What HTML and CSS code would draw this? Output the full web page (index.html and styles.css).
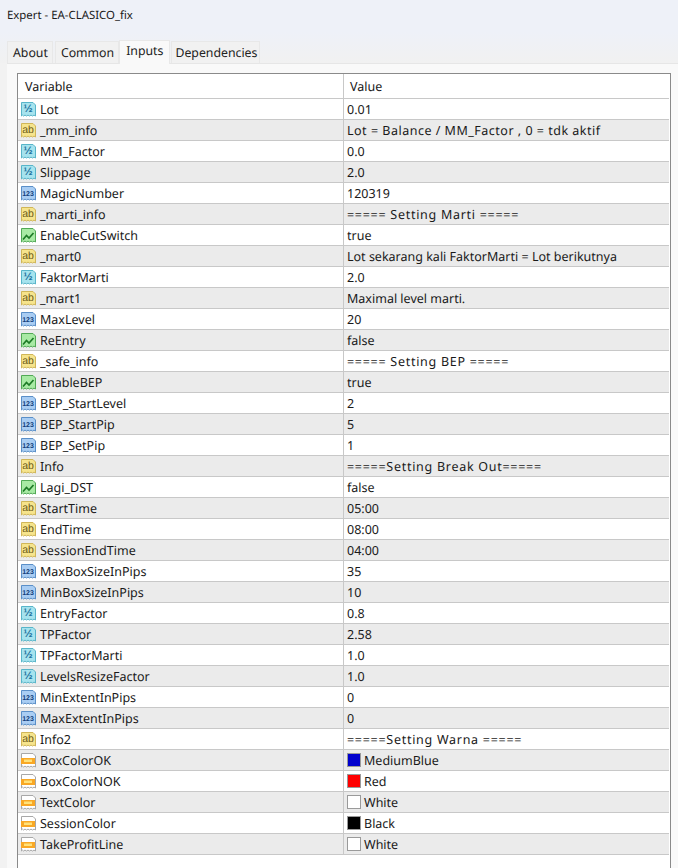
FILE: index.html
```html
<!DOCTYPE html>
<html lang="en">
<head>
<meta charset="utf-8">
<title>Expert - EA-CLASICO_fix</title>
<link rel="stylesheet" href="styles.css">
</head>
<body>
<svg class="defs" width="0" height="0" aria-hidden="true">
  <symbol id="page" viewBox="0 0 17 17"><path d="M1.5 1.5h11.5l2.5 2.5v11l-1.5-.9-1.5.9-1.5-.9-1.5.9-1.5-.9-1.5.9-1.5-.9-1.5.9-1 -.9-1 .9z" stroke-linejoin="round"/></symbol>
  <symbol id="wave" viewBox="0 0 17 17"><path d="M3 12.5l3.5-4 2.5 2.5 4.5-5" fill="none" stroke="#1d7a26" stroke-width="1.7"/></symbol>
  <symbol id="band" viewBox="0 0 17 17"><rect x="1" y="6" width="14" height="6" fill="#f9a825" stroke="none"/><rect x="4" y="7.5" width="8" height="2.5" fill="#ffe27a" stroke="none"/></symbol>
</svg>
<header class="titlebar">Expert - EA-CLASICO_fix</header>
<nav class="tabs">
  <span class="tab">About</span>
  <span class="tab">Common</span>
  <span class="tab active">Inputs</span>
  <span class="tab">Dependencies</span>
</nav>
<main class="panel">
  <div class="table">
    <div class="row head"><div class="var">Variable</div><div class="val">Value</div></div>
    <div class="row"><div class="var"><span class="ic dbl"><svg><use href="#page"/></svg></span>Lot</div><div class="val">0.01</div></div>
    <div class="row"><div class="var"><span class="ic str"><svg><use href="#page"/></svg></span>_mm_info</div><div class="val wide">Lot = Balance / MM_Factor , 0 = tdk aktif</div></div>
    <div class="row"><div class="var"><span class="ic dbl"><svg><use href="#page"/></svg></span>MM_Factor</div><div class="val">0.0</div></div>
    <div class="row"><div class="var"><span class="ic dbl"><svg><use href="#page"/></svg></span>Slippage</div><div class="val">2.0</div></div>
    <div class="row"><div class="var"><span class="ic int"><svg><use href="#page"/></svg></span>MagicNumber</div><div class="val">120319</div></div>
    <div class="row"><div class="var"><span class="ic str"><svg><use href="#page"/></svg></span>_marti_info</div><div class="val banner">===== Setting Marti =====</div></div>
    <div class="row"><div class="var"><span class="ic bool"><svg><use href="#page"/><use href="#wave"/></svg></span>EnableCutSwitch</div><div class="val">true</div></div>
    <div class="row"><div class="var"><span class="ic str"><svg><use href="#page"/></svg></span>_mart0</div><div class="val">Lot sekarang kali FaktorMarti = Lot berikutnya</div></div>
    <div class="row"><div class="var"><span class="ic dbl"><svg><use href="#page"/></svg></span>FaktorMarti</div><div class="val">2.0</div></div>
    <div class="row"><div class="var"><span class="ic str"><svg><use href="#page"/></svg></span>_mart1</div><div class="val">Maximal level marti.</div></div>
    <div class="row"><div class="var"><span class="ic int"><svg><use href="#page"/></svg></span>MaxLevel</div><div class="val">20</div></div>
    <div class="row"><div class="var"><span class="ic bool"><svg><use href="#page"/><use href="#wave"/></svg></span>ReEntry</div><div class="val">false</div></div>
    <div class="row"><div class="var"><span class="ic str"><svg><use href="#page"/></svg></span>_safe_info</div><div class="val banner">===== Setting BEP =====</div></div>
    <div class="row"><div class="var"><span class="ic bool"><svg><use href="#page"/><use href="#wave"/></svg></span>EnableBEP</div><div class="val">true</div></div>
    <div class="row"><div class="var"><span class="ic int"><svg><use href="#page"/></svg></span>BEP_StartLevel</div><div class="val">2</div></div>
    <div class="row"><div class="var"><span class="ic int"><svg><use href="#page"/></svg></span>BEP_StartPip</div><div class="val">5</div></div>
    <div class="row"><div class="var"><span class="ic int"><svg><use href="#page"/></svg></span>BEP_SetPip</div><div class="val">1</div></div>
    <div class="row"><div class="var"><span class="ic str"><svg><use href="#page"/></svg></span>Info</div><div class="val banner">=====Setting Break Out=====</div></div>
    <div class="row"><div class="var"><span class="ic bool"><svg><use href="#page"/><use href="#wave"/></svg></span>Lagi_DST</div><div class="val">false</div></div>
    <div class="row"><div class="var"><span class="ic str"><svg><use href="#page"/></svg></span>StartTime</div><div class="val">05:00</div></div>
    <div class="row"><div class="var"><span class="ic str"><svg><use href="#page"/></svg></span>EndTime</div><div class="val">08:00</div></div>
    <div class="row"><div class="var"><span class="ic str"><svg><use href="#page"/></svg></span>SessionEndTime</div><div class="val">04:00</div></div>
    <div class="row"><div class="var"><span class="ic int"><svg><use href="#page"/></svg></span>MaxBoxSizeInPips</div><div class="val">35</div></div>
    <div class="row"><div class="var"><span class="ic int"><svg><use href="#page"/></svg></span>MinBoxSizeInPips</div><div class="val">10</div></div>
    <div class="row"><div class="var"><span class="ic dbl"><svg><use href="#page"/></svg></span>EntryFactor</div><div class="val">0.8</div></div>
    <div class="row"><div class="var"><span class="ic dbl"><svg><use href="#page"/></svg></span>TPFactor</div><div class="val">2.58</div></div>
    <div class="row"><div class="var"><span class="ic dbl"><svg><use href="#page"/></svg></span>TPFactorMarti</div><div class="val">1.0</div></div>
    <div class="row"><div class="var"><span class="ic dbl"><svg><use href="#page"/></svg></span>LevelsResizeFactor</div><div class="val">1.0</div></div>
    <div class="row"><div class="var"><span class="ic int"><svg><use href="#page"/></svg></span>MinExtentInPips</div><div class="val">0</div></div>
    <div class="row"><div class="var"><span class="ic int"><svg><use href="#page"/></svg></span>MaxExtentInPips</div><div class="val">0</div></div>
    <div class="row"><div class="var"><span class="ic str"><svg><use href="#page"/></svg></span>Info2</div><div class="val banner">=====Setting Warna =====</div></div>
    <div class="row"><div class="var"><span class="ic col"><svg><use href="#page"/><use href="#band"/></svg></span>BoxColorOK</div><div class="val"><span class="sw blue"></span>MediumBlue</div></div>
    <div class="row"><div class="var"><span class="ic col"><svg><use href="#page"/><use href="#band"/></svg></span>BoxColorNOK</div><div class="val"><span class="sw red"></span>Red</div></div>
    <div class="row"><div class="var"><span class="ic col"><svg><use href="#page"/><use href="#band"/></svg></span>TextColor</div><div class="val"><span class="sw white"></span>White</div></div>
    <div class="row"><div class="var"><span class="ic col"><svg><use href="#page"/><use href="#band"/></svg></span>SessionColor</div><div class="val"><span class="sw black"></span>Black</div></div>
    <div class="row"><div class="var"><span class="ic col"><svg><use href="#page"/><use href="#band"/></svg></span>TakeProfitLine</div><div class="val"><span class="sw white"></span>White</div></div>
  </div>
</main>
</body>
</html>
```
FILE: styles.css
```css
* { box-sizing: border-box; }
html, body { margin: 0; height: 100%; overflow: hidden; }
body {
  width: 678px;
  height: 868px;
  background: #f2f2f2;
  font-family: "Noto Sans", "Open Sans", sans-serif;
  font-size: 12px;
  color: #1a1a1a;
  display: flex;
  flex-direction: column;
  text-rendering: geometricPrecision;
}
.defs { position: absolute; }
.titlebar {
  height: 32px;
  flex: none;
  padding: 5px 0 0 7px;
  background: #eef1f8;
  font-size: 11.4px;
  line-height: 21px;
}
.tabs {
  flex: none;
  height: 31px;
  padding: 9px 0 0 7px;
  display: flex;
  align-items: flex-end;
  gap: 2px;
  font-size: 12.3px;
  background: linear-gradient(#eef1f8, #f1f1f1);
}
.tab {
  height: 22px;
  padding: 0 4px 0 5px;
  line-height: 22px;
  background: #f1f1f1;
  border: 1px solid #e8e8e8;
  border-bottom: 0;
  color: #222;
}
.tab:last-child { padding: 0 2px 0 3px; }
.tab.active {
  height: 24px;
  line-height: 20px;
  background: #f9f9f9;
  padding: 0 6px 3px;
  position: relative;
  z-index: 1;
  margin: 0 -1px -1px -2px;
}
.panel {
  flex: 1;
  min-height: 0;
  background: #f9f9f9;
  margin-left: 7px;
  padding: 9px 7px 0 10px;
  border-top: 1px solid #e6e6e6;
}
.table {
  height: 100%;
  background: #fff;
  border: 1px solid #8a8a8a;
  border-bottom: 0;
  padding-right: 1px;
  font-size: 12.5px;
}
.row {
  display: grid;
  grid-template-columns: 326px 1fr;
  height: 21px;
  border-bottom: 1px solid #c8c8c8;
}
.row:nth-child(odd) { background: #ebebeb; }
.row.head {
  height: 25px;
  background: #fff;
}
.head .var { padding-left: 7px; }
.head .val { padding-left: 6px; }
.var {
  display: flex;
  align-items: center;
  gap: 3px;
  padding-left: 2px;
  border-right: 1px solid #c8c8c8;
  white-space: nowrap;
}
.val {
  display: flex;
  align-items: center;
  padding-left: 3px;
  white-space: nowrap;
}
.wide { letter-spacing: 0.5px; }
.banner { letter-spacing: 0.72px; }
.ic {
  position: relative;
  width: 17px;
  height: 17px;
  flex: none;
  text-align: center;
  letter-spacing: 0;
  font: bold 9.5px/15px "Liberation Sans", sans-serif;
}
.ic svg { display: block; width: 17px; height: 17px; }
.ic::after {
  position: absolute;
  left: 0;
  top: 1px;
  width: 16px;
}
.dbl { fill: #a6e3ee; stroke: #58b5c9; color: #1b6f9c; }
.dbl::after { content: "½"; font-size: 11px; }
.str { fill: #f6e48c; stroke: #d0b658; color: #6b5a18; }
.str::after { content: "ab"; font-size: 10.5px; font-weight: normal; }
.int { fill: #a9cdf3; stroke: #5a8fc8; color: #123f7c; }
.int::after { content: "123"; font-size: 7px; top: 2px; }
.bool { fill: #a8eaa4; stroke: #52a956; }
.col { fill: #fff; stroke: #a8a8a8; }
.sw {
  width: 14px;
  height: 14px;
  margin-right: 3px;
  border: 1px solid #9a9a9a;
  flex: none;
}
.blue { background: #0000cd; }
.red { background: #ff0000; }
.white { background: #fff; }
.black { background: #000; }
```
